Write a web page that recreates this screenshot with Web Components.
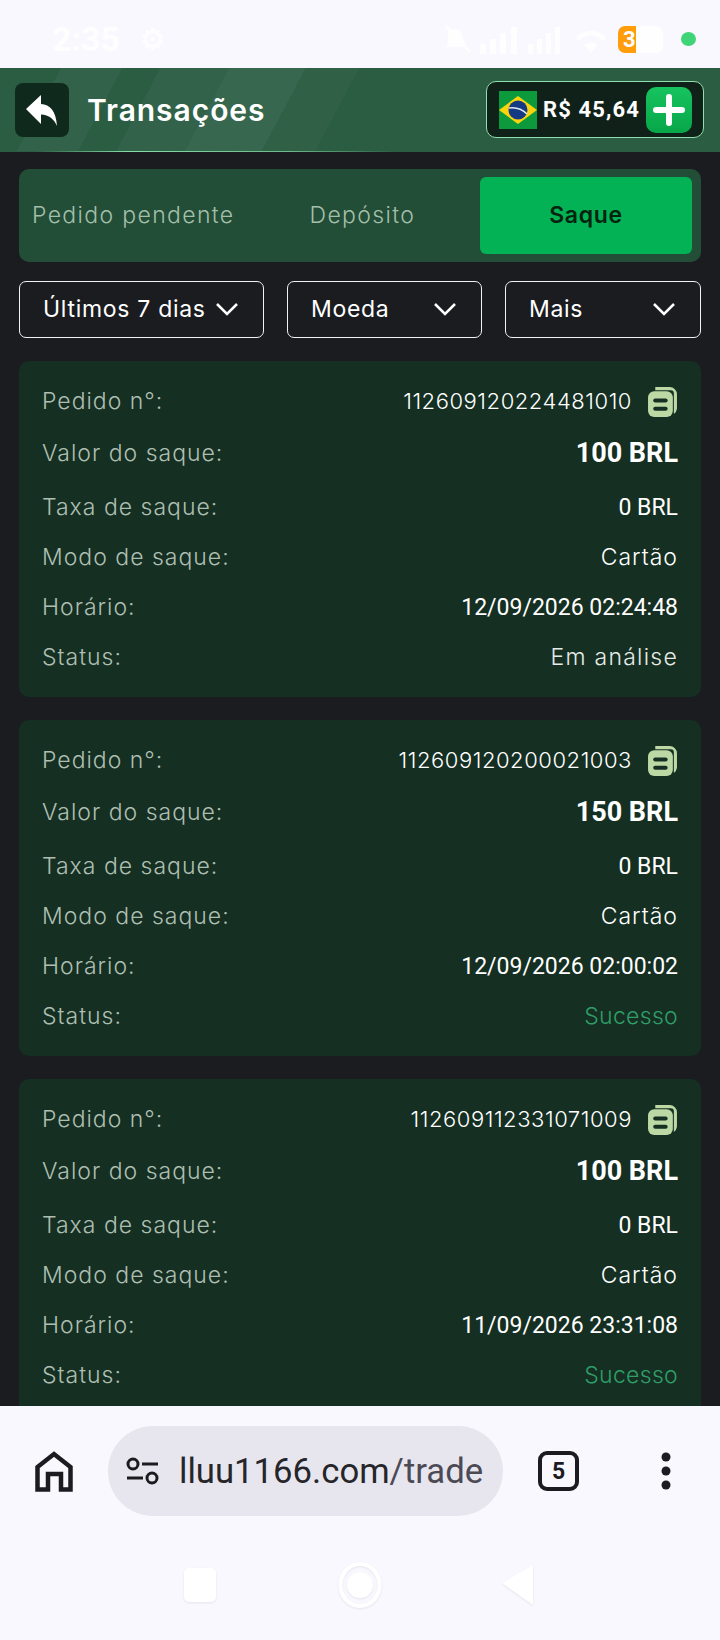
<!DOCTYPE html>
<html lang="pt">
<head>
<meta charset="utf-8">
<title>Transações</title>
<style>
  html, body { margin: 0; padding: 0; }
  body {
    width: 720px;
    height: 1640px;
    overflow: hidden;
    display: flex;
    flex-direction: column;
    background: #1b1c20;
    font-family: Inter, "Noto Sans", sans-serif;
  }
</style>
</head>
<body>
  <status-bar></status-bar>
  <app-header title-text="Transações" balance="R$ 45,64"></app-header>
  <trade-page>
    <tab-bar></tab-bar>
    <filter-row></filter-row>
    <order-card order="112609120224481010" amount="100 BRL" time="12/09/2026 02:24:48" status="Em análise"></order-card>
    <order-card order="112609120200021003" amount="150 BRL" time="12/09/2026 02:00:02" status="Sucesso" ok></order-card>
    <order-card order="112609112331071009" amount="100 BRL" time="11/09/2026 23:31:08" status="Sucesso" ok></order-card>
  </trade-page>
  <browser-bar url="lluu1166.com" path="/trade" tabs="5"></browser-bar>
  <nav-buttons></nav-buttons>

<script>
class StatusBar extends HTMLElement {
  constructor() {
    super();
    this.attachShadow({mode: "open"}).innerHTML = `
      <style>
        :host { display: flex; align-items: center; height: 68px; padding: 10px 24px 0 52px; box-sizing: border-box;
                background: #f8f8fe; color: #fefeff; font: 700 34px Roboto, sans-serif; }
        .sm { font-size: 28px; margin-left: 20px; }
        .right { margin-left: auto; display: flex; align-items: center; }
        .batt { width: 45px; height: 27px; margin-left: 12px; border-radius: 7px; display: flex; background: linear-gradient(90deg, #ff9d0a 18px, #fefeff 18px);
                font: 700 22px/27px Roboto, sans-serif; padding-left: 5px; box-sizing: border-box; gap: 4px; }
        .dot { width: 15px; height: 14px; border-radius: 50%; background: #3fd477; margin-left: 18px; }
      </style>
      <span>2:35</span><span class="sm">⚙</span>
      <div class="right">
        <svg width="163" height="30" viewBox="0 0 163 30" fill="#fefeff">
          <path d="M2 23c3-3 3-6 3-11 0-4 3-7 7-7s7 3 7 7l5 11z"/><path d="M3 2l24 26" stroke="#fefeff" stroke-width="3"/>
          <rect x="37" y="20" width="6" height="10"/><rect x="47" y="15" width="6" height="15"/><rect x="57" y="9" width="6" height="21"/><rect x="68" y="3" width="6" height="27"/>
          <rect x="85" y="20" width="5" height="10"/><rect x="94" y="15" width="5" height="15"/><rect x="103" y="9" width="5" height="21"/><rect x="112" y="3" width="5" height="27"/>
          <path d="M133 13a21 21 0 0 1 30 0l-3 4a16 16 0 0 0-24 0zM141 21a10 10 0 0 1 14 0l-7 8z"/>
        </svg>
        <div class="batt"><span>3</span><span>5</span></div>
        <div class="dot"></div>
      </div>`;
  }
}

class AppHeader extends HTMLElement {
  constructor() {
    super();
    const title = this.getAttribute("title-text");
    const balance = this.getAttribute("balance");
    this.attachShadow({mode: "open"}).innerHTML = `
      <style>
        :host { display: flex; align-items: center; height: 84px; padding: 0 16px 0 15px; box-sizing: border-box;
                color: #fff; border-bottom: 1px solid transparent;
                border-image: linear-gradient(90deg, #2b5d43 5%, #86dfa6 18%, #6cba8b 40%, #2b5d43 55%) 1;
                background:
                  linear-gradient(118deg, transparent 0 8%, rgba(255,255,255,.03) 8% 16%, transparent 16% 21%, rgba(255,255,255,.03) 21% 30%, rgba(255,255,255,.06) 30% 40%, rgba(255,255,255,.025) 40% 47%, transparent 47%),
                  #2b5d43; }
        .back { width: 54px; height: 54px; border-radius: 8px; background: #0f2a1c; display: flex; align-items: center; justify-content: center; }
        h1 { margin: 0 0 0 18px; font: 600 30px Inter, sans-serif; letter-spacing: .95px; }
        .wallet { margin-left: auto; width: 218px; height: 57px; box-sizing: border-box; border: 1px solid #8fe0ad; border-radius: 10px;
                  background: #10211a; display: flex; align-items: center; padding: 0 11px 0 12px; }
        .balance { font: 700 22px Roboto, sans-serif; letter-spacing: 1.100px; margin-left: 6px; white-space: nowrap; }
        .plus { margin-left: auto; width: 46px; height: 46px; border-radius: 10px; background: linear-gradient(#17c45f, #07a648);
                display: flex; align-items: center; justify-content: center; }
      </style>
      <div class="back">
        <svg width="34" height="34" viewBox="0 0 34 34" fill="#fff"><path d="M16 2v9c9 .5 15 7 16 22-3-7-8-11-16-11.500v9.500L1 16z"/></svg>
      </div>
      <h1>${title}</h1>
      <div class="wallet">
        <svg width="38" height="38" viewBox="0 0 38 38"><rect width="38" height="38" fill="#0d9a3c"/><path d="M19 5l19 14-19 14L0 19z" fill="#fbd50c"/><circle cx="19" cy="19" r="9.500" fill="#143a84"/><path d="M10 17c7-1 13 1 18 6" stroke="#dfe7f2" stroke-width="1.500" fill="none"/></svg>
        <span class="balance">${balance}</span>
        <div class="plus"><svg width="32" height="32" viewBox="0 0 32 32"><path d="M16 3v26M3 16h26" stroke="#fff" stroke-width="6" stroke-linecap="round"/></svg></div>
      </div>`;
  }
}

class TradePage extends HTMLElement {
  constructor() {
    super();
    this.attachShadow({mode: "open"}).innerHTML = `
      <style>
        :host { display: flex; flex-direction: column; height: 1254px; overflow: hidden; box-sizing: border-box;
                padding: 17px 19px 0; background: #1b1c20; flex: none; }
      </style>
      <slot></slot>`;
  }
}

class TabBar extends HTMLElement {
  constructor() {
    super();
    this.attachShadow({mode: "open"}).innerHTML = `
      <style>
        :host { display: flex; align-items: center; height: 93px; box-sizing: border-box; padding: 8px 9px 8px 13px;
                border-radius: 10px; background: #224d37; font: 350 23px Inter, sans-serif; color: #a4bfa9; flex: none; }
        .t { white-space: nowrap; letter-spacing: 1.350px; margin-top: -2px; }
        .t2 { margin-left: 75px; }
        .on { margin-left: auto; width: 212px; height: 100%; margin-top: 0; padding-bottom: 2px; box-sizing: border-box; border-radius: 6px; background: #03b254; color: #06230f; font-weight: 600; letter-spacing: .7px;
              display: flex; align-items: center; justify-content: center; }
      </style>
      <span class="t">Pedido pendente</span>
      <span class="t t2">Depósito</span>
      <div class="t on">Saque</div>`;
  }
}

class FilterSelect extends HTMLElement {
  constructor() {
    super();
    this.attachShadow({mode: "open"}).innerHTML = `
      <style>
        :host { display: flex; align-items: center; justify-content: space-between; box-sizing: border-box; height: 57px;
                border: 1px solid #f2f2f2; border-radius: 7px; padding: 0 24px 2px 23px; color: #fff; font: 400 23px Inter, sans-serif; letter-spacing: .7px; }
      </style>
      <slot></slot>
      <svg width="24" height="14" viewBox="0 0 24 14" fill="none"><path d="M2 2l10 10L22 2" stroke="#fff" stroke-width="2.500"/></svg>`;
  }
}

class FilterRow extends HTMLElement {
  constructor() {
    super();
    this.attachShadow({mode: "open"}).innerHTML = `
      <style>
        :host { display: grid; grid-template-columns: 245px 195px 196px; justify-content: space-between; margin-top: 19px; flex: none; }
      </style>
      <filter-select>Últimos 7 dias</filter-select>
      <filter-select>Moeda</filter-select>
      <filter-select>Mais</filter-select>`;
  }
}

class OrderCard extends HTMLElement {
  constructor() {
    super();
    const a = n => this.getAttribute(n);
    const ok = this.hasAttribute("ok");
    this.attachShadow({mode: "open"}).innerHTML = `
      <style>
        :host { display: flex; flex-direction: column; flex: none; height: 336px; box-sizing: border-box; margin-top: 23px;
                padding: 20px 23px 0 23px; border-radius: 10px; background: #152f22; }
        .row { display: flex; align-items: center; justify-content: space-between; height: 40px; margin-bottom: 10px; }
        .first { margin-bottom: 12px; }
        .big { margin-bottom: 14px; }
        .k { color: #aebfb2; font: 350 23px Inter, sans-serif; letter-spacing: 1px; }
        .v { color: #fff; font: 400 23px Roboto, sans-serif; }
        .amt { font-weight: 700; font-size: 27px; }
        .mont { font-family: Inter, sans-serif; font-weight: 350; font-size: 23px; letter-spacing: .3px; }
        .num { font-size: 22px; letter-spacing: .55px; }
        .wide { letter-spacing: 1px; }
        .wider { letter-spacing: 1.250px; }
        .id { display: flex; align-items: center; gap: 15px; }
        .id svg { flex: none; }
      </style>
      <div class="row first"><span class="k">Pedido n°:</span><span class="id"><span class="v mont num">${a("order")}</span>
        <svg width="31" height="31" viewBox="0 0 30 30"><path d="M8 1h14a7 7 0 0 1 7 7v14a7 7 0 0 1-3 5V7a3 3 0 0 0-3-3H8z" fill="#bcd8a4"/><rect x="1" y="5" width="24" height="25" rx="6" fill="#bcd8a4"/><rect x="6" y="12" width="14" height="4" rx="2" fill="#152f22"/><rect x="6" y="20" width="14" height="4" rx="2" fill="#152f22"/></svg></span></div>
      <div class="row big"><span class="k">Valor do saque:</span><span class="v amt">${a("amount")}</span></div>
      <div class="row"><span class="k">Taxa de saque:</span><span class="v">0 BRL</span></div>
      <div class="row"><span class="k">Modo de saque:</span><span class="v mont wide">Cartão</span></div>
      <div class="row"><span class="k">Horário:</span><span class="v">${a("time")}</span></div>
      <div class="row"><span class="k">Status:</span><span class="v mont ${ok ? "" : "wider"}" style="color:${ok ? "#2f9e68" : "#e6ebe7"}">${a("status")}</span></div>`;
  }
}

class BrowserBar extends HTMLElement {
  constructor() {
    super();
    this.attachShadow({mode: "open"}).innerHTML = `
      <style>
        :host { display: flex; align-items: center; flex: none; height: 146px; box-sizing: border-box; padding: 20px 0 36px 35px; background: #f8f8fe; color: #1c1b1f; }
        .pill { margin-left: 35px; width: 395px; height: 90px; border-radius: 45px; background: #e7e6ee; display: flex; align-items: center; padding-left: 18px; box-sizing: border-box; }
        .url { font: 400 34.700px Roboto, sans-serif; margin-left: 19px; white-space: nowrap; color: #26252a; }
        .url span { color: #4c4a55; }
        .tabs { margin-left: 35px; width: 33px; height: 32px; border: 4px solid #1c1b1f; border-radius: 9px; display: flex; align-items: center; justify-content: center; font: 700 23px Roboto, sans-serif; }
        .more { margin-left: 81px; }
      </style>
      <svg width="38" height="41" viewBox="0 0 38 41" fill="none" stroke="#1c1b1f" stroke-width="4.500"><path d="M2.500 38.500V16L19 3l16.500 13v22.500H26V23H13v15.500z"/></svg>
      <div class="pill">
        <svg width="34" height="28" viewBox="0 0 34 28" fill="none" stroke="#1c1b1f" stroke-width="3"><circle cx="7" cy="7" r="5"/><path d="M16 7h16M1 21h16"/><circle cx="26" cy="21" r="5"/></svg>
        <span class="url">${this.getAttribute("url")}<span>${this.getAttribute("path")}</span></span>
      </div>
      <div class="tabs">${this.getAttribute("tabs")}</div>
      <svg class="more" width="12" height="38" viewBox="0 0 12 38" fill="#1c1b1f"><circle cx="6" cy="5" r="4.500"/><circle cx="6" cy="19" r="4.500"/><circle cx="6" cy="33" r="4.500"/></svg>`;
  }
}

class NavButtons extends HTMLElement {
  constructor() {
    super();
    this.attachShadow({mode: "open"}).innerHTML = `
      <style>
        :host { display: flex; align-items: center; flex: 1; padding-left: 184px; padding-bottom: 22px; box-sizing: border-box; background: #f8f8fe; }
        svg { filter: drop-shadow(0 1px 1px rgba(0,0,0,.08)); }
        .c { margin-left: 122px; }
        .t { margin-left: 119px; }
      </style>
      <svg width="32" height="34" viewBox="0 0 32 34"><rect width="32" height="34" rx="5" fill="#fff"/></svg>
      <svg class="c" width="44" height="46" viewBox="0 0 44 46" fill="none"><ellipse cx="22" cy="23" rx="19.500" ry="21" stroke="#fff" stroke-width="4"/><circle cx="22" cy="23" r="13" fill="#fff"/></svg>
      <svg class="t" width="32" height="40" viewBox="0 0 32 40"><path d="M32 0v40L1 18z" fill="#fff"/></svg>`;
  }
}

customElements.define("status-bar", StatusBar);
customElements.define("app-header", AppHeader);
customElements.define("trade-page", TradePage);
customElements.define("tab-bar", TabBar);
customElements.define("filter-select", FilterSelect);
customElements.define("filter-row", FilterRow);
customElements.define("order-card", OrderCard);
customElements.define("browser-bar", BrowserBar);
customElements.define("nav-buttons", NavButtons);
</script>
</body>
</html>
